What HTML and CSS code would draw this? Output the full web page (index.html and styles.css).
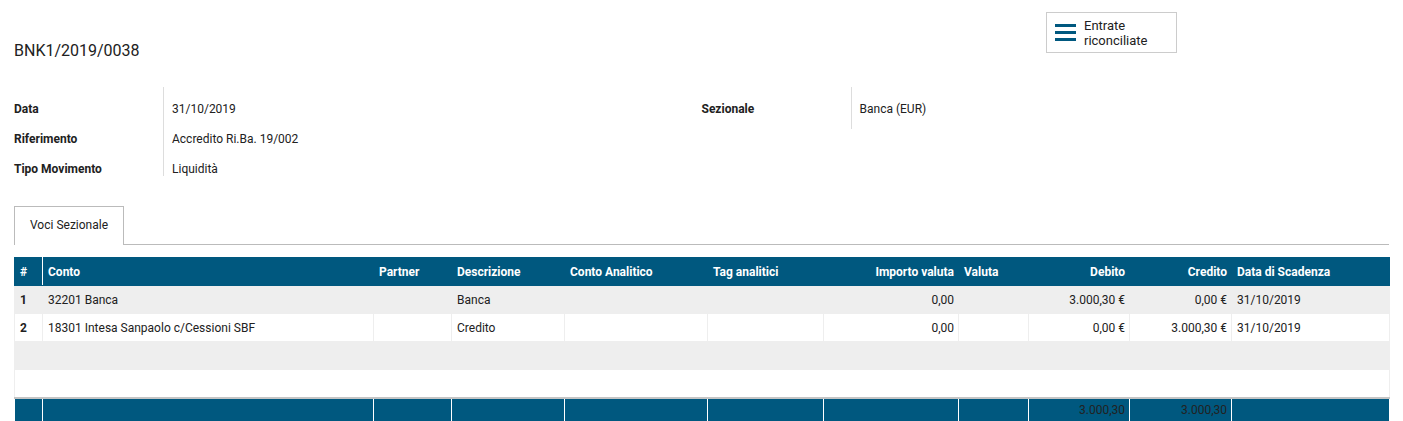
FILE: index.html
```html
<!DOCTYPE html>
<html lang="it">
<head>
<meta charset="utf-8">
<title>BNK1/2019/0038</title>
<link rel="stylesheet" href="styles.css">
</head>
<body>
<div class="page">
  <div class="header">
    <h1 class="title">BNK1/2019/0038</h1>
    <div class="button-box">
      <button class="stat-btn" type="button">
        <span class="stat-icon"><span></span><span></span><span></span></span>
        <span class="stat-text">Entrate<br>riconciliate</span>
      </button>
    </div>
  </div>

  <div class="form">
    <div class="group">
      <div class="labels labels-3">
        <div class="label">Data</div>
        <div class="label">Riferimento</div>
        <div class="label">Tipo Movimento</div>
      </div>
      <div class="values">
        <div class="value">31/10/2019</div>
        <div class="value">Accredito Ri.Ba. 19/002</div>
        <div class="value">Liquidità</div>
      </div>
    </div>
    <div class="group">
      <div class="labels labels-1">
        <div class="label">Sezionale</div>
      </div>
      <div class="values">
        <div class="value">Banca (EUR)</div>
      </div>
    </div>
  </div>

  <div class="tabs">
    <div class="tab">Voci Sezionale</div>
  </div>

  <table class="lines">
    <colgroup>
      <col class="c-num">
      <col class="c-conto">
      <col class="c-partner">
      <col class="c-descr">
      <col class="c-analitico">
      <col class="c-tag">
      <col class="c-importo">
      <col class="c-valuta">
      <col class="c-debito">
      <col class="c-credito">
      <col class="c-data">
    </colgroup>
    <thead>
      <tr>
        <th class="num">#</th>
        <th>Conto</th>
        <th>Partner</th>
        <th>Descrizione</th>
        <th>Conto Analitico</th>
        <th>Tag analitici</th>
        <th class="r">Importo valuta</th>
        <th>Valuta</th>
        <th class="r">Debito</th>
        <th class="r">Credito</th>
        <th>Data di Scadenza</th>
      </tr>
    </thead>
    <tbody>
      <tr class="odd">
        <td class="num">1</td>
        <td>32201 Banca</td>
        <td></td>
        <td>Banca</td>
        <td></td>
        <td></td>
        <td class="r">0,00</td>
        <td></td>
        <td class="r">3.000,30 €</td>
        <td class="r">0,00 €</td>
        <td>31/10/2019</td>
      </tr>
      <tr class="even">
        <td class="num">2</td>
        <td>18301 Intesa Sanpaolo c/Cessioni SBF</td>
        <td></td>
        <td>Credito</td>
        <td></td>
        <td></td>
        <td class="r">0,00</td>
        <td></td>
        <td class="r">0,00 €</td>
        <td class="r">3.000,30 €</td>
        <td>31/10/2019</td>
      </tr>
      <tr class="odd empty"><td colspan="11"></td></tr>
      <tr class="even empty"><td colspan="11"></td></tr>
    </tbody>
    <tfoot>
      <tr>
        <td></td>
        <td></td>
        <td></td>
        <td></td>
        <td></td>
        <td></td>
        <td></td>
        <td></td>
        <td class="r">3.000,30</td>
        <td class="r">3.000,30</td>
        <td></td>
      </tr>
    </tfoot>
  </table>
</div>
</body>
</html>
```

FILE: styles.css
```css
html, body {
  margin: 0;
  padding: 0;
  background: #ffffff;
}

body {
  font-family: Roboto, "Liberation Sans", Arial, sans-serif;
  font-size: 12px;
  color: #212121;
}

.page {
  padding: 0 14px;
}

/* ---------- header ---------- */
.header {
  display: flex;
  align-items: flex-start;
  height: 87px;
}

.title {
  margin: 41px 0 0 0;
  font-size: 16px;
  line-height: 20px;
  font-weight: 400;
  color: #212121;
}

.button-box {
  margin-left: auto;
  margin-right: 212px;
  margin-top: 12px;
}

.stat-btn {
  display: flex;
  align-items: center;
  box-sizing: border-box;
  width: 131px;
  height: 41px;
  padding: 0 0 0 8px;
  margin: 0;
  background: #ffffff;
  border: 1px solid #cccccc;
  border-radius: 0;
  font-family: Roboto, "Liberation Sans", Arial, sans-serif;
  font-size: 13px;
  line-height: 15px;
  color: #212121;
  text-align: left;
  cursor: pointer;
}

.stat-icon {
  display: flex;
  flex-direction: column;
  gap: 4px;
  width: 21px;
  margin-right: 8px;
}

.stat-icon span {
  display: block;
  height: 3px;
  background: #00587f;
}

.stat-text {
  display: block;
  padding-top: 1px;
}

/* ---------- form ---------- */
.form {
  display: grid;
  grid-template-columns: 1fr 1fr;
  align-items: start;
  height: 89px;
}

.group {
  display: flex;
  align-items: flex-start;
}

.labels {
  box-sizing: border-box;
  width: 150px;
  padding-top: 7px;
  border-right: 1px solid #dddddd;
}

.labels-3 {
  height: 89px;
}

.labels-1 {
  height: 42px;
}

.label {
  font-weight: 700;
  line-height: 30px;
  white-space: nowrap;
  color: #212121;
}

.values {
  padding-top: 7px;
  padding-left: 8px;
}

.value {
  line-height: 30px;
  white-space: nowrap;
}

/* ---------- tabs ---------- */
.tabs {
  display: flex;
  margin-top: 30px;
  height: 38px;
  border-bottom: 1px solid #bbbbbb;
}

.tab {
  box-sizing: border-box;
  height: 39px;
  padding: 0 15px;
  line-height: 37px;
  border: 1px solid #bbbbbb;
  border-bottom: none;
  background: #ffffff;
  color: #212121;
  margin-bottom: -1px;
}

/* ---------- table ---------- */
.lines {
  margin-top: 12px;
  width: 1375px;
  table-layout: fixed;
  border-collapse: collapse;
  font-size: 12px;
}

.c-num { width: 28px; }
.c-conto { width: 331px; }
.c-partner { width: 78px; }
.c-descr { width: 113px; }
.c-analitico { width: 143px; }
.c-tag { width: 116px; }
.c-importo { width: 135px; }
.c-valuta { width: 70px; }
.c-debito { width: 101px; }
.c-credito { width: 102px; }
.c-data { width: 158px; }

.lines th,
.lines td {
  height: 28px;
  padding: 0 4px 0 5px;
  box-sizing: border-box;
  text-align: left;
  vertical-align: middle;
  white-space: nowrap;
  overflow: hidden;
}

.lines th {
  background: #00587f;
  color: #ffffff;
  font-weight: 700;
  border: 1px solid #00587f;
}

.lines th.num {
  border-right: 1px solid #ffffff;
}

.lines .r {
  text-align: right;
}

.lines td {
  border: 1px solid #eeeeee;
  color: #212121;
}

.lines td.num {
  font-weight: 700;
}

.lines tr.odd td {
  background: #eeeeee;
}

.lines tr.even td {
  background: #ffffff;
}

.lines tfoot td {
  height: 24px;
  background: #00587f;
  border: 1px solid #ffffff;
  border-top: 2px solid #c4c4c4;
  color: #222222;
}
```
